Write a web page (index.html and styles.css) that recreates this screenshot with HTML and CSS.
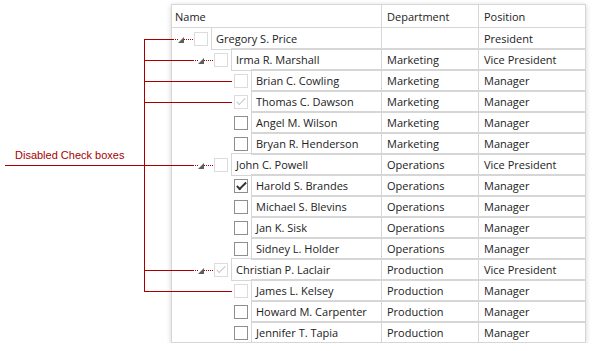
FILE: index.html
```html
<!DOCTYPE html>
<html lang="en">
<head>
    <meta charset="UTF-8">
    <title>Tree List - Disabled Check Boxes</title>
    <link rel="stylesheet" href="styles.css">
</head>
<body>
    <div class="treelist">
        <div class="head">
            <div class="cell name-col">Name</div>
            <div class="cell">Department</div>
            <div class="cell">Position</div>
        </div>

        <div class="row lvl0">
            <div class="name-col"><span class="exp"></span><span class="chk off"></span><span class="label">Gregory S. Price</span></div>
            <div class="cell"></div>
            <div class="cell">President</div>
        </div>
        <div class="row lvl1">
            <div class="name-col"><span class="exp"></span><span class="chk off"></span><span class="label">Irma R. Marshall</span></div>
            <div class="cell">Marketing</div>
            <div class="cell">Vice President</div>
        </div>
        <div class="row lvl2">
            <div class="name-col"><span class="exp none"></span><span class="chk off"></span><span class="label">Brian C. Cowling</span></div>
            <div class="cell">Marketing</div>
            <div class="cell">Manager</div>
        </div>
        <div class="row lvl2">
            <div class="name-col"><span class="exp none"></span><span class="chk off checked"></span><span class="label">Thomas C. Dawson</span></div>
            <div class="cell">Marketing</div>
            <div class="cell">Manager</div>
        </div>
        <div class="row lvl2">
            <div class="name-col"><span class="exp none"></span><span class="chk"></span><span class="label">Angel M. Wilson</span></div>
            <div class="cell">Marketing</div>
            <div class="cell">Manager</div>
        </div>
        <div class="row lvl2">
            <div class="name-col"><span class="exp none"></span><span class="chk"></span><span class="label">Bryan R. Henderson</span></div>
            <div class="cell">Marketing</div>
            <div class="cell">Manager</div>
        </div>
        <div class="row lvl1">
            <div class="name-col"><span class="exp"></span><span class="chk off"></span><span class="label">John C. Powell</span></div>
            <div class="cell">Operations</div>
            <div class="cell">Vice President</div>
        </div>
        <div class="row lvl2">
            <div class="name-col"><span class="exp none"></span><span class="chk checked"></span><span class="label">Harold S. Brandes</span></div>
            <div class="cell">Operations</div>
            <div class="cell">Manager</div>
        </div>
        <div class="row lvl2">
            <div class="name-col"><span class="exp none"></span><span class="chk"></span><span class="label">Michael S. Blevins</span></div>
            <div class="cell">Operations</div>
            <div class="cell">Manager</div>
        </div>
        <div class="row lvl2">
            <div class="name-col"><span class="exp none"></span><span class="chk"></span><span class="label">Jan K. Sisk</span></div>
            <div class="cell">Operations</div>
            <div class="cell">Manager</div>
        </div>
        <div class="row lvl2">
            <div class="name-col"><span class="exp none"></span><span class="chk"></span><span class="label">Sidney L. Holder</span></div>
            <div class="cell">Operations</div>
            <div class="cell">Manager</div>
        </div>
        <div class="row lvl1">
            <div class="name-col"><span class="exp"></span><span class="chk off checked"></span><span class="label">Christian P. Laclair</span></div>
            <div class="cell">Production</div>
            <div class="cell">Vice President</div>
        </div>
        <div class="row lvl2">
            <div class="name-col"><span class="exp none"></span><span class="chk off"></span><span class="label">James L. Kelsey</span></div>
            <div class="cell">Production</div>
            <div class="cell">Manager</div>
        </div>
        <div class="row lvl2">
            <div class="name-col"><span class="exp none"></span><span class="chk"></span><span class="label">Howard M. Carpenter</span></div>
            <div class="cell">Production</div>
            <div class="cell">Manager</div>
        </div>
        <div class="row lvl2 last">
            <div class="name-col"><span class="exp none"></span><span class="chk"></span><span class="label">Jennifer T. Tapia</span></div>
            <div class="cell">Production</div>
            <div class="cell">Manager</div>
        </div>
    </div>

    <!-- callout drawn over the grid -->
    <div class="callout">
        <svg width="601" height="351" viewBox="0 0 601 351">
            <g stroke="#a80000" stroke-width="1" fill="none">
                <path d="M144.5 39 V291"/>
                <path d="M5 165.5 H193"/>
                <path d="M144 39.5 H173 M144 60.5 H193 M144 81.5 H232 M144 102.5 H232 M144 270.5 H193 M144 291.5 H232"/>
                <g stroke-dasharray="1 1">
                    <path d="M173 39.5 H178 M184 39.5 H193"/>
                    <path d="M193 60.5 H198 M204 60.5 H213"/>
                    <path d="M193 165.5 H198 M204 165.5 H213"/>
                    <path d="M193 270.5 H198 M204 270.5 H213"/>
                </g>
            </g>
        </svg>
        <span class="callout-text">Disabled Check boxes</span>
    </div>
</body>
</html>
```

FILE: styles.css
```css
body {
    margin: 0;
    background: #fff;
    font-family: "Open Sans", "Noto Sans", sans-serif;
    font-size: 11px;
    color: #222;
}
.treelist {
    width: 413px;
    margin: 4px 0 0 171px;
    border: 1px solid #d6d6d6;
    box-shadow: 0 1px 5px rgba(0,0,0,0.18);
}
.head,
.row {
    display: grid;
    grid-template-columns: 209px 97px 107px;
}
.head {
    height: 22px;
    border-bottom: 1px solid #d6d6d6;
}
.head .cell {
    line-height: 22px;
    padding: 1px 0 0 5px;
    border-left: 1px solid #d6d6d6;
}
.head .name-col {
    border-left: 0;
    padding-left: 3px;
}
.row {
    height: 22px;
    margin-top: -1px;
}
.row.last {
    margin-bottom: -1px;
}
.row .cell {
    border: 1px solid #d6d6d6;
    border-right: 0;
    line-height: 20px;
    padding: 1px 0 0 5px;
    white-space: nowrap;
}
.row .name-col {
    display: flex;
    align-items: center;
}
.lvl1 .name-col { padding-left: 20px; }
.lvl2 .name-col { padding-left: 40px; }

.exp {
    width: 20px;
    height: 22px;
    position: relative;
    flex: none;
}
.exp::after {
    content: "";
    position: absolute;
    left: 6px;
    top: 9px;
    width: 0;
    height: 0;
    border-style: solid;
    border-width: 0 0 6px 6px;
    border-color: transparent transparent #5e5e5e transparent;
}
.exp.none::after {
    display: none;
}
.chk {
    flex: none;
    width: 12px;
    height: 12px;
    margin: 1px 2px 0 2px;
    border: 1px solid #8e8e8e;
    background: #fff;
    position: relative;
}
.chk.off {
    border-color: #dcdcdc;
}
.chk.checked::after {
    content: "";
    position: absolute;
    left: 4px;
    top: 0px;
    width: 3px;
    height: 8px;
    border: solid #333;
    border-width: 0 2px 2px 0;
    transform: rotate(45deg);
}
.chk.off.checked::after {
    border-color: #c4c4c4;
    border-width: 0 1.5px 1.5px 0;
}
.label {
    flex: 1;
    align-self: stretch;
    border: 1px solid #d6d6d6;
    border-right: 0;
    line-height: 20px;
    padding: 1px 0 0 4px;
    margin-left: 1px;
    white-space: nowrap;
}

.callout {
    position: absolute;
    left: 0;
    top: 0;
    width: 601px;
    height: 351px;
    pointer-events: none;
}
.callout svg {
    display: block;
}
.callout-text {
    position: absolute;
    left: 15px;
    top: 149px;
    font-family: "Liberation Sans", sans-serif;
    font-size: 11px;
    color: #a80000;
}
```
